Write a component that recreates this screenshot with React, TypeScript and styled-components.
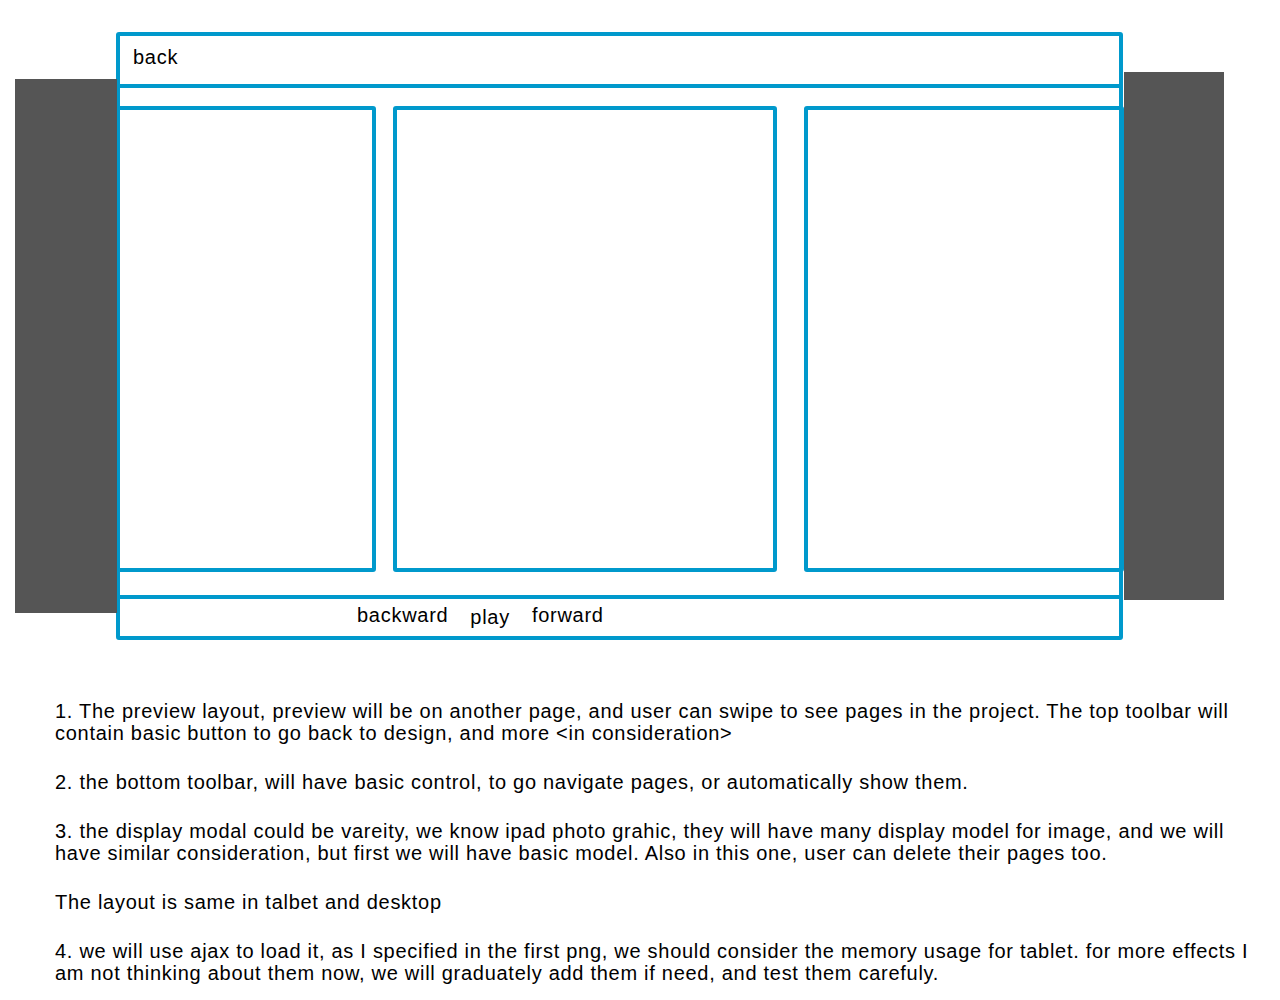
import React from 'react';
import styled, { createGlobalStyle } from 'styled-components';

const Global = createGlobalStyle`
  html, body {
    margin: 0;
    padding: 0;
    background: #fff;
  }
  body {
    font-family: "Liberation Sans", Arial, Helvetica, sans-serif;
    color: #000;
  }
`;

const BLUE = '#0099cc';

const Page = styled.div`
  width: 1280px;
  padding-top: 32px;
`;

const Mockup = styled.div`
  display: flex;
  align-items: flex-start;
`;

const SideBlock = styled.div<{ $top: number; $height: number; $width: number }>`
  position: relative;
  z-index: 1;
  flex: none;
  width: ${(p) => p.$width}px;
  height: ${(p) => p.$height}px;
  margin-top: ${(p) => p.$top}px;
  background: #555555;
`;

const LeftBlock = styled(SideBlock)`
  margin-left: 15px;
  margin-right: -1px;
`;

const RightBlock = styled(SideBlock)`
  margin-left: 1px;
`;

const Frame = styled.div`
  flex: none;
  width: 1007px;
  box-sizing: border-box;
  border: 4px solid ${BLUE};
  border-radius: 3px;
  display: flex;
  flex-direction: column;
`;

const Label = styled.span<{ $drop?: number }>`
  font-size: 20px;
  line-height: 22px;
  letter-spacing: 0.72px;
  white-space: nowrap;
  position: relative;
  top: ${(p) => p.$drop ?? 0}px;
`;

const TopBar = styled.div`
  height: 52px;
  box-sizing: border-box;
  border-bottom: 4px solid ${BLUE};
  padding: 10px 0 0 13px;
`;

const Pages = styled.div`
  display: flex;
  margin: 18px -5px 23px -4px;
  height: 466px;
`;

const PageCard = styled.div<{ $width: number }>`
  flex: none;
  width: ${(p) => p.$width}px;
  box-sizing: border-box;
  border: 4px solid ${BLUE};
  border-radius: 3px;
`;

const Gap = styled.div<{ $width: number }>`
  flex: none;
  width: ${(p) => p.$width}px;
`;

const BottomBar = styled.div`
  height: 41px;
  box-sizing: border-box;
  border-top: 4px solid ${BLUE};
  padding: 5px 0 0 237px;
  display: flex;
  gap: 22px;
`;

const Notes = styled.div`
  margin-top: 60px;
  padding-left: 55px;
  display: flex;
  flex-direction: column;
  gap: 27px;
`;

const Para = styled.p`
  margin: 0;
  display: flex;
  flex-direction: column;
`;

const notes: string[][] = [
  [
    '1. The preview layout, preview will be on another page, and user can swipe to see pages in the project. The top toolbar will',
    'contain basic button to go back to design, and more <in consideration>',
  ],
  ['2. the bottom toolbar, will have basic control, to go navigate pages, or automatically show them.'],
  [
    '3. the display modal could be vareity, we know ipad photo grahic, they will have many display model for image, and we will',
    'have similar consideration, but first we will have basic model. Also in this one, user can delete their pages too.',
  ],
  ['The layout is same in talbet and desktop'],
  [
    '4. we will use ajax to load it, as I specified in the first png, we should consider the memory usage for tablet. for more effects I',
    'am not thinking about them now, we will graduately add them if need, and test them carefuly.',
  ],
];

export default function App() {
  return (
    <Page>
      <Global />
      <Mockup>
        <LeftBlock $top={47} $height={534} $width={102} />
        <Frame>
          <TopBar>
            <Label>back</Label>
          </TopBar>
          <Pages>
            <PageCard $width={260} />
            <Gap $width={17} />
            <PageCard $width={384} />
            <Gap $width={27} />
            <PageCard $width={320} />
          </Pages>
          <BottomBar>
            <Label>backward</Label>
            <Label $drop={2}>play</Label>
            <Label>forward</Label>
          </BottomBar>
        </Frame>
        <RightBlock $top={40} $height={528} $width={100} />
      </Mockup>
      <Notes>
        {notes.map((lines, i) => (
          <Para key={i}>
            {lines.map((line, j) => (
              <Label key={j}>{line}</Label>
            ))}
          </Para>
        ))}
      </Notes>
    </Page>
  );
}
